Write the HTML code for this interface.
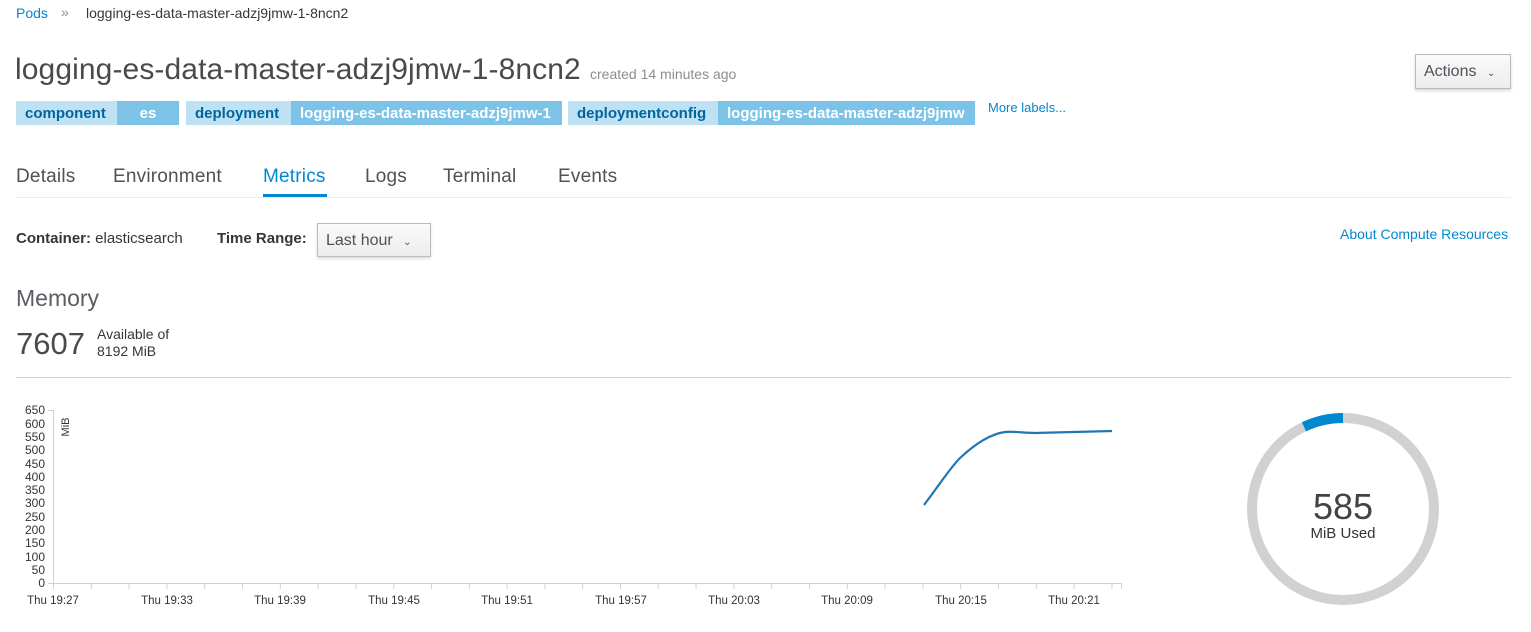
<!DOCTYPE html>
<html><head><meta charset="utf-8"><style>
*{margin:0;padding:0;box-sizing:border-box}
body{width:1531px;height:632px;background:#fff;font-family:"Liberation Sans",sans-serif;color:#363636;position:relative;overflow:hidden}
.a{position:absolute;white-space:nowrap}
.lab{position:absolute;top:101px;height:24px;font-size:15px;line-height:25px;font-weight:bold;padding:0 9px}
.k{background:#bee1f4;color:#00659c}
.v{background:#7dc3e8;color:#fff}
.tab{position:absolute;top:166px;font-size:19px;color:#4d5258;letter-spacing:0.2px}
</style></head><body>
<div class="a" style="left:16px;top:5px;font-size:14px;color:#0088ce">Pods</div>
<div class="a" style="left:61px;top:4px;font-size:14px;color:#8b8d8f">»</div>
<div class="a" style="left:86px;top:5px;font-size:14px;color:#363636">logging-es-data-master-adzj9jmw-1-8ncn2</div>

<div class="a" style="left:15px;top:53px;font-size:30px;color:#4a4a4a;letter-spacing:0.1px">logging-es-data-master-adzj9jmw-1-8ncn2</div>
<div class="a" style="left:590px;top:66px;font-size:14px;color:#8b8d8f">created 14 minutes ago</div>

<div class="a" style="left:1415px;top:54px;width:96px;height:35px;border:1px solid #bbb;background:linear-gradient(#fafafa,#ededed);box-shadow:0 2px 3px rgba(0,0,0,.15);font-size:16px;color:#4d5258;line-height:33px;padding-left:8px">Actions <span style="font-size:10px;margin-left:6px">&#8964;</span></div>

<div class="lab k" style="left:16px;width:101px">component</div>
<div class="lab v" style="left:117px;width:62px;text-align:center">es</div>
<div class="lab k" style="left:186px;width:105px">deployment</div>
<div class="lab v" style="left:291px;width:271px">logging-es-data-master-adzj9jmw-1</div>
<div class="lab k" style="left:568px;width:150px">deploymentconfig</div>
<div class="lab v" style="left:718px;width:257px">logging-es-data-master-adzj9jmw</div>
<div class="a" style="left:988px;top:100px;font-size:13px;color:#0088ce">More labels...</div>

<div class="tab" style="left:16px">Details</div>
<div class="tab" style="left:113px">Environment</div>
<div class="tab" style="left:263px;color:#0088ce">Metrics</div>
<div class="tab" style="left:365px">Logs</div>
<div class="tab" style="left:443px">Terminal</div>
<div class="tab" style="left:558px">Events</div>
<div class="a" style="left:16px;top:197px;width:1495px;height:1px;background:#ededed"></div>
<div class="a" style="left:263px;top:194px;width:64px;height:3px;background:#0088ce"></div>

<div class="a" style="left:16px;top:230px;font-size:15px;color:#363636"><b>Container:</b> elasticsearch</div>
<div class="a" style="left:217px;top:230px;font-size:15px;font-weight:bold;color:#363636">Time Range:</div>
<div class="a" style="left:317px;top:223px;width:114px;height:34px;border:1px solid #bbb;background:linear-gradient(#fafafa,#ededed);box-shadow:0 2px 3px rgba(0,0,0,.12);font-size:16px;color:#4d5258;line-height:33px;padding-left:8px">Last hour <span style="font-size:10px;margin-left:6px">&#8964;</span></div>
<div class="a" style="left:1340px;top:226px;font-size:14px;color:#0088ce">About Compute Resources</div>

<div class="a" style="left:16px;top:285px;font-size:23px;color:#5a5e63">Memory</div>
<div class="a" style="left:16px;top:326px;font-size:31px;color:#4a4a4a">7607</div>
<div class="a" style="left:97px;top:326px;font-size:14px;line-height:17px;color:#363636">Available of<br>8192 MiB</div>
<div class="a" style="left:16px;top:377px;width:1495px;height:1px;background:#d1d1d1"></div>

<svg class="a" style="left:0;top:400px" width="1531" height="232" viewBox="0 400 1531 232">
<g font-family="Liberation Sans,sans-serif" font-size="12" fill="#333" text-anchor="end">
<text x="45" y="414">650</text><text x="45" y="428">600</text><text x="45" y="441">550</text><text x="45" y="454">500</text><text x="45" y="468">450</text><text x="45" y="481">400</text><text x="45" y="494">350</text><text x="45" y="507">300</text><text x="45" y="521">250</text><text x="45" y="534">200</text><text x="45" y="547">150</text><text x="45" y="561">100</text><text x="45" y="574">50</text><text x="45" y="587">0</text>
</g>
<text transform="translate(69,427) rotate(-90)" font-family="Liberation Sans,sans-serif" font-size="11" fill="#333" text-anchor="middle">MiB</text>
<g stroke="#d1d1d1" stroke-width="1">
<line x1="53.5" y1="410" x2="53.5" y2="583"/>
<line x1="48" y1="410.5" x2="53" y2="410.5"/>
<line x1="48" y1="583.5" x2="1122" y2="583.5"/>
<path d="M53.5 583v6M91.3 583v6M129.1 583v6M166.9 583v6M204.7 583v6M242.5 583v6M280.3 583v6M318.1 583v6M355.9 583v6M393.7 583v6M431.5 583v6M469.3 583v6M507.1 583v6M544.9 583v6M582.7 583v6M620.5 583v6M658.3 583v6M696.1 583v6M733.9 583v6M771.7 583v6M809.5 583v6M847.3 583v6M885.1 583v6M922.9 583v6M960.7 583v6M998.5 583v6M1036.3 583v6M1074.1 583v6M1111.9 583v6M1121.5 583v6"/>
</g>
<g font-family="Liberation Sans,sans-serif" font-size="11.5" fill="#333" text-anchor="middle">
<text x="53" y="604">Thu 19:27</text><text x="167" y="604">Thu 19:33</text><text x="280" y="604">Thu 19:39</text><text x="394" y="604">Thu 19:45</text><text x="507" y="604">Thu 19:51</text><text x="621" y="604">Thu 19:57</text><text x="734" y="604">Thu 20:03</text><text x="847" y="604">Thu 20:09</text><text x="961" y="604">Thu 20:15</text><text x="1074" y="604">Thu 20:21</text>
</g>
<path d="M924 505 C940 484 950 468 960 458 C975 444 990 434 1005 432 C1015 431 1022 433 1035 433 L1112 431" fill="none" stroke="#1f77b4" stroke-width="2.2"/>
<circle cx="1343" cy="509" r="91" fill="none" stroke="#d1d1d1" stroke-width="10"/>
<path d="M1343 418 A91 91 0 0 0 1304 426.8" fill="none" stroke="#0088ce" stroke-width="10"/>
<text x="1343" y="519" font-family="Liberation Sans,sans-serif" font-size="36" fill="#444" text-anchor="middle">585</text>
<text x="1343" y="538" font-family="Liberation Sans,sans-serif" font-size="15" fill="#333" text-anchor="middle">MiB Used</text>
</svg>
</body></html>
